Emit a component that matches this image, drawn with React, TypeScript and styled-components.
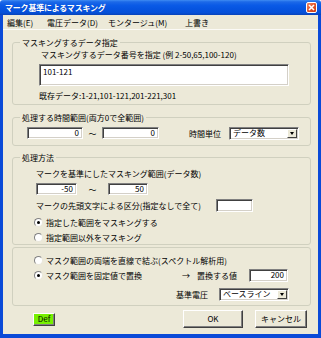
import React from "react";
import styled, { createGlobalStyle } from "styled-components";

const Global = createGlobalStyle`
  html, body { margin: 0; padding: 0; background: #ffffff; }
  body {
    font-family: "Noto Sans CJK JP", "Noto Sans", sans-serif;
    font-size: 8px;
    color: #000;
  }
  * { box-sizing: border-box; }
`;

const Window = styled.div`
  width: 321px;
  height: 338px;
  display: flex;
  flex-direction: column;
`;

const TitleBar = styled.div`
  flex: none;
  height: 15px;
  display: flex;
  align-items: center;
  padding: 0 4px 0 5px;
  border-radius: 3px 3px 0 0;
  background: linear-gradient(
    to bottom,
    #3f8cf3 0%,
    #1d6ae8 12%,
    #0a5ae6 35%,
    #0654e0 60%,
    #0550d8 85%,
    #0843b8 100%
  );
`;

const Title = styled.div`
  flex: 1;
  color: #fff;
  font-weight: bold;
  font-size: 8px;
  line-height: 11px;
  letter-spacing: -0.2px;
  text-shadow: 1px 0 0 rgba(0, 0, 0, 0.15);
`;

const CloseButton = styled.div`
  width: 11px;
  height: 11px;
  border-radius: 2px;
  border: 1px solid #fff;
  background: linear-gradient(135deg, #f08a68 0%, #e2552c 50%, #c83c14 100%);
  display: flex;
  align-items: center;
  justify-content: center;
`;

const Frame = styled.div`
  flex: 1;
  display: flex;
  flex-direction: column;
  background: #ece9d8;
  border-style: solid;
  border-color: #0a4ad8;
  border-width: 0 3px 4px 3px;
`;

const MenuBar = styled.div`
  flex: none;
  height: 15px;
  display: flex;
  align-items: center;
  padding-left: 4px;
  border-bottom: 1px solid #fbfaf6;
`;

const MenuItem = styled.div<{ $w: number }>`
  width: ${(p) => p.$w}px;
  line-height: 11px;
  white-space: nowrap;
`;

const Content = styled.div`
  flex: 1;
  display: flex;
  flex-direction: column;
  padding: 0 7px 0 9px;
`;

const Group = styled.div<{ $h: number; $mt: number }>`
  position: relative;
  height: ${(p) => p.$h}px;
  margin-top: ${(p) => p.$mt}px;
  border: 1px solid #d0d0bf;
  border-radius: 3px;
  display: flex;
  flex-direction: column;
`;

const Legend = styled.div`
  position: absolute;
  top: -6px;
  left: 7px;
  padding: 0 2px;
  background: #ece9d8;
  line-height: 11px;
  white-space: nowrap;
`;

const TextLine = styled.div<{ $mt: number; $ml: number }>`
  margin-top: ${(p) => p.$mt}px;
  margin-left: ${(p) => p.$ml}px;
  line-height: 11px;
  white-space: nowrap;
`;

const sunken = `
  background: #fff;
  border: 1px solid;
  border-color: #808080 #ffffff #ffffff #808080;
  box-shadow: inset 1px 1px 0 #404040, inset -1px -1px 0 #d4d0c8;
`;

const TextArea = styled.div`
  ${sunken}
  margin-top: 4px;
  margin-left: 26px;
  width: 250px;
  height: 22px;
  padding: 1px 3px;
  line-height: 11px;
`;

const Row = styled.div<{ $mt: number; $pl?: number; $pr?: number; $h: number }>`
  display: flex;
  align-items: center;
  height: ${(p) => p.$h}px;
  margin-top: ${(p) => p.$mt}px;
  padding-left: ${(p) => p.$pl ?? 0}px;
  padding-right: ${(p) => p.$pr ?? 0}px;
`;

const Field = styled.div<{ $w: number; $h?: number }>`
  ${sunken}
  flex: none;
  width: ${(p) => p.$w}px;
  height: ${(p) => p.$h ?? 12}px;
  padding: 0 3px;
  line-height: 10px;
  text-align: right;
`;

const Tilde = styled.div<{ $w: number }>`
  width: ${(p) => p.$w}px;
  text-align: center;
  line-height: 11px;
`;

const Label = styled.div<{ $w?: number; $auto?: boolean; $mr?: number }>`
  flex: none;
  ${(p) => (p.$w ? `width: ${p.$w}px;` : "")}
  ${(p) => (p.$auto ? "margin-left: auto;" : "")}
  margin-right: ${(p) => p.$mr ?? 0}px;
  line-height: 11px;
  white-space: nowrap;
`;

const Select = styled.div<{ $w: number }>`
  ${sunken}
  flex: none;
  width: ${(p) => p.$w}px;
  height: 13px;
  display: flex;
  align-items: center;
  padding: 0 1px 0 3px;
  line-height: 10px;
`;

const SelectText = styled.div`
  flex: 1;
  white-space: nowrap;
`;

const DropButton = styled.div`
  width: 10px;
  height: 9px;
  background: #ece9d8;
  border: 1px solid;
  border-color: #ffffff #404040 #404040 #ffffff;
  display: flex;
  align-items: center;
  justify-content: center;
  &::after {
    content: "";
    border-left: 2.5px solid transparent;
    border-right: 2.5px solid transparent;
    border-top: 3px solid #000;
  }
`;

const RadioRow = styled.div<{ $mt: number; $w?: number }>`
  display: flex;
  align-items: center;
  margin-top: ${(p) => p.$mt}px;
  ${(p) => (p.$w ? `width: ${p.$w}px;` : "")}
  flex: none;
  height: 11px;
`;

const RadioCircle = styled.span<{ $on?: boolean }>`
  flex: none;
  width: 9px;
  height: 9px;
  border-radius: 50%;
  background: #fff;
  border: 1px solid;
  border-color: #808080 #e8e6da #e8e6da #808080;
  display: flex;
  align-items: center;
  justify-content: center;
  margin-right: 3px;
  &::after {
    content: "";
    width: 3px;
    height: 3px;
    border-radius: 50%;
    background: ${(p) => (p.$on ? "#000" : "transparent")};
  }
`;

const RadioText = styled.span`
  line-height: 11px;
  white-space: nowrap;
`;

const Indented = styled.div<{ $pl: number }>`
  display: flex;
  flex-direction: column;
  padding-left: ${(p) => p.$pl}px;
`;

const ButtonRow = styled.div`
  display: flex;
  align-items: center;
  height: 18px;
  margin-top: 4px;
  padding-left: 21px;
  padding-right: 4px;
`;

const Button = styled.div<{ $w: number; $h: number; $green?: boolean }>`
  flex: none;
  width: ${(p) => p.$w}px;
  height: ${(p) => p.$h}px;
  background: ${(p) => (p.$green ? "#77f000" : "#ece9d8")};
  border: 1px solid;
  border-color: #ffffff #404040 #404040 #ffffff;
  box-shadow: inset -1px -1px 0 #808080;
  display: flex;
  align-items: center;
  justify-content: center;
  line-height: 10px;
`;

const Spacer = styled.div`
  flex: 1;
`;

const Gap = styled.div<{ $w: number }>`
  flex: none;
  width: ${(p) => p.$w}px;
`;

export default function App() {
  return (
    <>
      <Global />
      <Window>
        <TitleBar>
          <Title>マーク基準によるマスキング</Title>
          <CloseButton>
            <svg width="7" height="7" viewBox="0 0 7 7">
              <path d="M1 1 L6 6 M6 1 L1 6" stroke="#fff" strokeWidth="1.6" />
            </svg>
          </CloseButton>
        </TitleBar>
        <Frame>
          <MenuBar>
            <MenuItem $w={40}>編集(E)</MenuItem>
            <MenuItem $w={61}>電圧データ(D)</MenuItem>
            <MenuItem $w={77}>モンタージュ(M)</MenuItem>
            <MenuItem $w={40}>上書き</MenuItem>
          </MenuBar>
          <Content>
            <Group $h={63} $mt={12}>
              <Legend>マスキングするデータ指定</Legend>
              <TextLine $mt={6} $ml={28}>
                マスキングするデータ番号を指定 (例 2-50,65,100-120)
              </TextLine>
              <TextArea>101-121</TextArea>
              <TextLine $mt={4} $ml={26}>
                既存データ:1-21,101-121,201-221,301
              </TextLine>
            </Group>

            <Group $h={29} $mt={12}>
              <Legend>処理する時間範囲(両方0で全範囲)</Legend>
              <Row $mt={9} $h={12} $pl={14} $pr={11}>
                <Field $w={56}>0</Field>
                <Tilde $w={19}>～</Tilde>
                <Field $w={57}>0</Field>
                <Label $auto $mr={8}>
                  時間単位
                </Label>
                <Select $w={70}>
                  <SelectText>データ数</SelectText>
                  <DropButton />
                </Select>
              </Row>
            </Group>

            <Group $h={88} $mt={11}>
              <Legend>処理方法</Legend>
              <TextLine $mt={10} $ml={23}>
                マークを基準にしたマスキング範囲(データ数)
              </TextLine>
              <Row $mt={4} $h={12} $pl={23}>
                <Field $w={41}>-50</Field>
                <Tilde $w={31}>～</Tilde>
                <Field $w={40}>50</Field>
              </Row>
              <Row $mt={4} $h={13} $pl={23}>
                <Label $w={180}>マークの先頭文字による区分(指定なしで全て)</Label>
                <Field $w={37} $h={13} />
              </Row>
              <Indented $pl={21}>
                <RadioRow $mt={5}>
                  <RadioCircle $on />
                  <RadioText>指定した範囲をマスキングする</RadioText>
                </RadioRow>
                <RadioRow $mt={4}>
                  <RadioCircle />
                  <RadioText>指定範囲以外をマスキング</RadioText>
                </RadioRow>
              </Indented>
            </Group>

            <Group $h={59} $mt={2}>
              <Indented $pl={21}>
                <RadioRow $mt={7}>
                  <RadioCircle />
                  <RadioText>マスク範囲の両端を直線で結ぶ(スペクトル解析用)</RadioText>
                </RadioRow>
              </Indented>
              <Row $mt={3} $h={13} $pl={21} $pr={22}>
                <RadioRow $mt={0} $w={148}>
                  <RadioCircle $on />
                  <RadioText>マスク範囲を固定値で置換</RadioText>
                </RadioRow>
                <Label $w={15}>→</Label>
                <Label>置換する値</Label>
                <Spacer />
                <Field $w={39} $h={13}>
                  200
                </Field>
              </Row>
              <Row $mt={6} $h={12} $pr={21}>
                <Label $auto $mr={11}>
                  基準電圧
                </Label>
                <Select $w={70}>
                  <SelectText>ベースライン</SelectText>
                  <DropButton />
                </Select>
              </Row>
            </Group>

            <ButtonRow>
              <Button $w={22} $h={13} $green>
                Def
              </Button>
              <Spacer />
              <Button $w={60} $h={18}>
                OK
              </Button>
              <Gap $w={12} />
              <Button $w={52} $h={18}>
                キャンセル
              </Button>
            </ButtonRow>
          </Content>
        </Frame>
      </Window>
    </>
  );
}
